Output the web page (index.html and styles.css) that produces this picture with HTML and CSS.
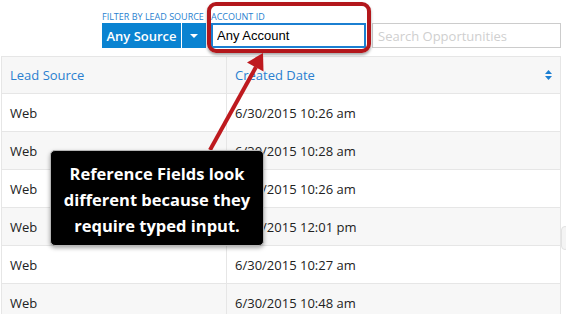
FILE: index.html
```html
<!DOCTYPE html>
<html lang="en">
<head>
  <meta charset="UTF-8" />
  <title>Opportunities</title>
  <link rel="stylesheet" href="styles.css">
</head>
<body>
  <div class="page">

    <!-- Filters -->
    <div class="filters">
      <div class="filter">
        <label>Filter by Lead Source</label>
        <div class="btn-group">
          <button class="btn-source">Any Source</button>
          <button class="btn-caret"><span class="caret"></span></button>
        </div>
      </div>
      <div class="filter">
        <label>Account ID</label>
        <input type="text" class="account-input" value="Any Account" />
      </div>
      <input type="text" class="search-input" placeholder="Search Opportunities" />
    </div>

    <!-- Table -->
    <div class="table-wrap">
      <table class="grid">
        <thead>
          <tr>
            <th class="col-source">Lead Source</th>
            <th>
              <div class="th-inner">
                <span>Created Date</span>
                <svg class="sort" width="7" height="10" viewBox="0 0 7 10">
                  <polygon points="3.5,0 7,4 0,4" fill="#1c7fd2"/>
                  <polygon points="0,6 7,6 3.5,10" fill="#1c7fd2"/>
                </svg>
              </div>
            </th>
          </tr>
        </thead>
        <tbody>
          <tr><td>Web</td><td>6/30/2015 10:26 am</td></tr>
          <tr><td>Web</td><td>6/30/2015 10:28 am</td></tr>
          <tr><td>Web</td><td>6/30/2015 10:26 am</td></tr>
          <tr><td>Web</td><td>6/30/2015 12:01 pm</td></tr>
          <tr><td>Web</td><td>6/30/2015 10:27 am</td></tr>
          <tr><td>Web</td><td>6/30/2015 10:48 am</td></tr>
        </tbody>
      </table>
    </div>

    <!-- Annotation overlay -->
    <div class="highlight"></div>
    <svg class="arrow" width="566" height="322" viewBox="0 0 566 322">
      <line x1="210" y1="150" x2="256" y2="67" stroke="#be1a1f" stroke-width="4"/>
      <polygon points="263,53 263.5,71.5 247,62.5" fill="#be1a1f"/>
    </svg>
    <div class="callout">Reference Fields look different because they require typed input.</div>
    <div class="edge-tab"></div>
  </div>
</body>
</html>
```

FILE: styles.css
```css
/* === GLOBAL === */
* {
  box-sizing: border-box;
  margin: 0;
  padding: 0;
}

body {
  background: #fff;
  color: #333;
  font-family: 'Open Sans', sans-serif;
  overflow: hidden;
}

.page {
  position: relative;
  width: 566px;
  height: 322px;
}

/* === FILTERS === */
.filters {
  display: flex;
  align-items: flex-end;
  padding: 11px 0 0 102px;
}

.filter {
  display: flex;
  flex-direction: column;
  margin-right: 5px;
}

.filter label {
  font-size: 9px;
  line-height: 11px;
  text-transform: uppercase;
  color: #2a7fd0;
  margin-bottom: 1px;
  white-space: nowrap;
}

.btn-group {
  display: flex;
  height: 25px;
}

.btn-group button {
  background: #0a83d1;
  color: #fff;
  border: none;
  font-family: 'Open Sans', sans-serif;
}

.btn-source {
  width: 79px;
  font-size: 13px;
  font-weight: 600;
  margin-right: 1px;
}

.btn-caret {
  width: 24px;
  display: flex;
  align-items: center;
  justify-content: center;
}

.caret {
  border-left: 4px solid transparent;
  border-right: 4px solid transparent;
  border-top: 4px solid #fff;
}

.account-input {
  width: 155px;
  height: 25px;
  border: 2px solid #1b7fd1;
  padding: 0 4px;
  font-family: 'Liberation Sans', sans-serif;
  font-size: 13px;
  color: #000;
}

.search-input {
  width: 189px;
  height: 25px;
  margin-left: 1px;
  border: 1px solid #ccc;
  padding: 0 5px;
  font-family: 'Open Sans', sans-serif;
  font-size: 13px;
}

.search-input::placeholder {
  color: #cfcfcf;
}

/* === TABLE === */
.table-wrap {
  margin: 8px 0 0 1px;
  width: 560px;
  height: 258px;
  overflow: hidden;
}

.grid {
  width: 560px;
  border-collapse: collapse;
  font-size: 13px;
}

.grid th,
.grid td {
  border: 1px solid #e6e6e6;
  text-align: left;
  padding: 0 8px;
}

.grid th {
  height: 37px;
  background: #f7f7f7;
  color: #2a7fd0;
  font-weight: 400;
}

.grid td {
  height: 38px;
  color: #222;
}

.col-source {
  width: 225px;
}

.grid tbody tr:nth-child(even) td {
  background: #f7f7f7;
}

.th-inner {
  display: flex;
  justify-content: space-between;
  align-items: center;
}

/* === ANNOTATION === */
.highlight {
  position: absolute;
  left: 207px;
  top: 2px;
  width: 164px;
  height: 51px;
  border: 4px solid #b3171c;
  border-radius: 9px;
  box-shadow: 0 2px 3px rgba(0,0,0,0.35);
}

.arrow {
  position: absolute;
  left: 0;
  top: 0;
}

.callout {
  position: absolute;
  left: 50px;
  top: 150px;
  width: 214px;
  height: 96px;
  padding: 10px 0 0;
  background: #000;
  border: 1px solid #b5b5b5;
  border-radius: 5px;
  box-shadow: 0 2px 4px rgba(0,0,0,0.35);
  color: #fff;
  font-size: 16.5px;
  font-weight: 700;
  line-height: 26px;
  text-align: center;
}

.edge-tab {
  position: absolute;
  left: 561px;
  top: 226px;
  width: 8px;
  height: 24px;
  background: #f4f4f4;
  border: 1px solid #e2e2e2;
  border-radius: 4px;
}
```
